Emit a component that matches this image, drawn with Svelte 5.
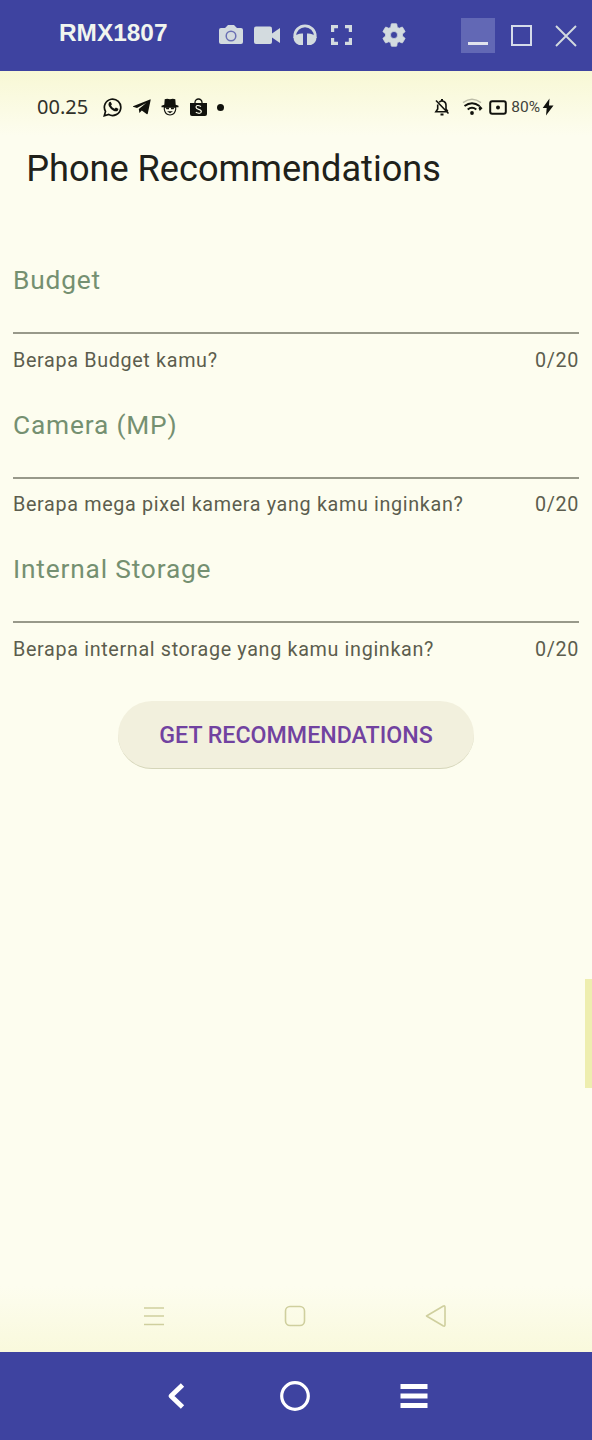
<script>
  const fields = [
    { label: 'Budget', hint: 'Berapa Budget kamu?' },
    { label: 'Camera (MP)', hint: 'Berapa mega pixel kamera yang kamu inginkan?' },
    { label: 'Internal Storage', hint: 'Berapa internal storage yang kamu inginkan?' }
  ];
</script>

<div class="window">
  <header class="titlebar">
    <span class="device">RMX1807</span>
    <div class="tools">
      <svg width="26" height="22" viewBox="0 0 26 22"><path fill="currentColor" fill-rule="evenodd" d="M3 4h4l3-3h6l3 3h4q2 0 2 2v12q0 2-2 2H3q-2 0-2-2V6q0-2 2-2z"/><circle cx="13" cy="12" r="4.800" fill="none" stroke="#6a70b4" stroke-width="1.500"/></svg>
      <svg width="28" height="22" viewBox="0 0 28 22"><rect x="0" y="2.500" width="18" height="17.500" rx="2" fill="currentColor"/><path fill="currentColor" d="M18 9.500l8-5.500v15l-8-5.500z"/></svg>
      <svg width="26" height="24" viewBox="0 0 26 24"><path fill="none" stroke="currentColor" stroke-width="2.800" d="M2.800 15v-2a10.200 10.200 0 0 1 20.400 0v2"/><path fill="currentColor" d="M1.500 14q4-4 9.500-3.500V22H7q-5.500-2-5.500-8zM15 10.500q5.500-.5 9.500 3.500 0 6-5.500 8h-4z"/></svg>
      <svg class="expand" width="23" height="22" viewBox="0 0 23 22"><path fill="none" stroke="currentColor" stroke-width="3.200" d="M8 2.600H2.600V8M15 2.600h5.400V8M8 19.400H2.600V14M15 19.400h5.400V14"/></svg>
      <svg class="gear" width="26" height="26" viewBox="1 1 22 22"><path fill="currentColor" stroke="currentColor" stroke-width=".6" d="M19.140 12.940c.04-.3.06-.61.06-.94 0-.32-.02-.64-.07-.94l2.030-1.580c.18-.14.23-.41.12-.61l-1.920-3.320c-.12-.22-.37-.29-.59-.22l-2.390.96c-.5-.38-1.030-.7-1.620-.94L14.400 2.810c-.04-.24-.24-.41-.48-.41h-3.840c-.24 0-.43.17-.47.41L9.250 5.350C8.660 5.590 8.120 5.920 7.630 6.290L5.240 5.330c-.22-.08-.47 0-.59.22L2.740 8.870c-.12.21-.08.47.12.61l2.030 1.580C4.840 11.360 4.800 11.690 4.800 12s.02.64.07.94l-2.030 1.580c-.18.14-.23.41-.12.61l1.920 3.320c.12.22.37.29.59.22l2.390-.96c.5.38 1.030.7 1.620.94l.36 2.540c.05.24.24.41.48.41h3.840c.24 0 .44-.17.47-.41l.36-2.540c.59-.24 1.130-.56 1.620-.94l2.390.96c.22.08.47 0 .59-.22l1.920-3.320c.12-.22.07-.47-.12-.61l-2.010-1.580zM12 15a3 3 0 1 1 0-6 3 3 0 0 1 0 6z"/></svg>
    </div>
    <div class="controls">
      <span class="minimize"><i></i></span>
      <span class="maximize"></span>
      <svg width="22" height="22" viewBox="0 0 22 22"><path fill="none" stroke="currentColor" stroke-width="1.900" d="M1 1l20 20M21 1L1 21"/></svg>
    </div>
  </header>

  <main class="screen">
    <div class="status">
      <span class="clock">00.25</span>
      <div class="apps">
        <svg width="20" height="20" viewBox="0 0 20 20"><path fill="none" stroke="currentColor" stroke-width="1.700" d="M1.300 18.700l1.200-4.300a8.200 8.200 0 1 1 3.200 3.100z"/><path fill="currentColor" d="M6 5.500q1-1.100 1.800-.6l1 2.200q.2.500-.8 1.500 1.200 2.300 3.600 3.200l1.300-1.300 2.400 1.200q.4.400-.4 1.700-1.600 1.700-4.400.3-3-1.500-4.700-4.700Q5 7 6 5.500z"/></svg>
        <svg width="19" height="18" viewBox="0 0 19 18"><path fill="currentColor" d="M1 8.300L18 1.400q.8-.2.600.8L15.800 15.500q-.3 1-1.200.4L9.800 12.400l-2.400 2.700-.6-4.100L14.200 4.900 5 10 1 8.800z"/></svg>
        <svg width="18" height="18" viewBox="0 0 18 18"><path fill="currentColor" d="M3.700 1.200q2.300-.8 5.300 0 3-.8 5.300 0l.4 5.500 2.800 1v1.500H.5V7.700l2.800-1z"/><path fill="#fbfbe9" stroke="currentColor" stroke-width="1.100" d="M3.300 9.200v2.200q.8 5.300 5.700 5.600 4.900-.3 5.700-5.600V9.200z"/><path fill="currentColor" d="M4.500 9.400H8v1.800H5.500zM10 9.400h3.500l-1 1.800H10zM6 13.200h6L9 15.300z"/></svg>
        <svg width="17" height="19" viewBox="0 0 17 19"><path fill="none" stroke="currentColor" stroke-width="1.300" d="M5 6V4.500a3.500 3.500 0 0 1 7 0V6"/><path fill="currentColor" d="M0 5h17v11q0 2-2 2H2q-2 0-2-2z"/><path fill="none" stroke="#fbfbe9" stroke-width="1.200" d="M11 8.500q-4.500-2.200-5 .5 0 1.600 2.600 2.300 2.900.8 2.700 2.500-.8 2.700-5.500.5"/></svg>
        <i class="dot"></i>
      </div>
      <div class="system">
        <svg width="16" height="18" viewBox="0 0 16 18"><path fill="none" stroke="currentColor" stroke-width="1.600" d="M5.200 4.200A4 4 0 0 1 12 7v4l1.800 2.500M3.700 6.500V11L1.900 13.700h10.500M2 2.500l12.500 13"/><path stroke="currentColor" stroke-width="2" d="M8 1v2M6.500 16.500h3"/></svg>
        <svg width="21" height="18" viewBox="0 0 21 18"><path fill="none" stroke="#bdbda8" stroke-width="1.500" d="M1 4.700q9-7 18 0"/><path fill="none" stroke="currentColor" stroke-width="2" d="M2.500 8q7.500-5.600 15 0M5.700 11.500q4.300-3.500 8.600 0"/><circle cx="10" cy="15" r="1.900" fill="currentColor"/><path fill="currentColor" d="M17.800 7.500l2.700 2.700-2.700 2.800-1.300-2.700z"/></svg>
        <svg width="18" height="15" viewBox="0 0 18 15"><rect x="1.200" y="1.200" width="15.600" height="12.600" rx="2" fill="none" stroke="currentColor" stroke-width="2"/><circle cx="9" cy="7.500" r="2" fill="currentColor"/></svg>
        <span class="percent">80%</span>
        <svg width="12" height="18" viewBox="0 0 12 18"><path fill="currentColor" d="M7.500.5L.7 10h4L4 17.500l7.500-10H7z"/></svg>
      </div>
    </div>

    <h1>Phone Recommendations</h1>

    <form>
      {#each fields as field}
        <div class="field">
          <div class="input">{field.label}</div>
          <div class="help"><span>{field.hint}</span><span>0/20</span></div>
        </div>
      {/each}
      <button type="button">GET RECOMMENDATIONS</button>
    </form>

    <i class="edge"></i>

    <nav class="gestures">
      <svg width="22" height="22" viewBox="0 0 22 22"><path d="M1 3h20M1 11h20M1 19.500h20"/></svg>
      <svg width="22" height="22" viewBox="0 0 22 22"><rect x="1.500" y="1.500" width="19" height="19" rx="4.500"/></svg>
      <svg width="22" height="24" viewBox="0 0 22 24"><path stroke-linejoin="round" d="M1.500 12L18 2.200q2-1 2 1v17.600q0 2-2 1z"/></svg>
    </nav>
  </main>

  <footer>
    <svg width="18" height="26" viewBox="0 0 18 26"><path fill="none" stroke="#fff" stroke-width="4.800" stroke-linejoin="round" d="M15.500 2L4 13l11.500 11"/></svg>
    <svg class="home" width="32" height="32" viewBox="0 0 32 32"><circle cx="16" cy="16" r="13.300" fill="none" stroke="#fff" stroke-width="3.200"/></svg>
    <svg width="28" height="26" viewBox="0 0 28 26"><path stroke="#fff" stroke-width="4.800" d="M.5 3.500h27M.5 13h27M.5 22.500h27"/></svg>
  </footer>
</div>

<style>
  :global(body) { margin: 0; }
  .window { width: 592px; height: 1440px; display: flex; flex-direction: column; font-family: Roboto, sans-serif; overflow: hidden; }
  svg { display: block; flex: none; }
  .titlebar { height: 71px; box-sizing: border-box; flex: none; display: flex; align-items: center; padding-left: 59px; background: #3e43a0; color: #d3dbdf; }
  .device { width: 158.500px; font: bold 24.400px/28px "Liberation Sans", sans-serif; color: #f1f5ef; margin-top: -6px; }
  .tools { display: flex; align-items: center; gap: 10px; margin-top: -2px; }
  .tools .expand { margin-left: 2px; }
  .tools .gear { margin-left: 18.500px; }
  .controls { display: flex; align-items: center; margin-left: auto; padding-right: 15px; }
  .minimize { width: 34px; height: 35px; margin: -1px 16px 0 0; background: #6268b5; display: flex; justify-content: center; align-items: flex-end; }
  .minimize i { width: 20px; height: 3px; background: #e2e4ee; margin-bottom: 8px; }
  .maximize { width: 21px; height: 21px; margin-right: 23px; box-sizing: border-box; border: 2px solid #d5dbea; }
  .screen { flex: 1; position: relative; display: flex; flex-direction: column; background: linear-gradient(#f8f8d5, #fdfdef 65px, #fdfdef 1215px, #f9f9dc); }
  .status { height: 36px; margin-top: 18px; display: flex; align-items: center; padding: 0 38px 0 37px; color: #11120d; }
  .clock { font: 20px/28px "Noto Sans", sans-serif; width: 66px; color: #30312a; }
  .apps { display: flex; align-items: center; gap: 9.500px; }
  .apps svg:nth-child(2) { margin-left: -1px; }
  .apps svg:nth-child(3) { margin-left: 1px; }
  .apps svg:nth-child(4) { margin-left: 1px; }
  .dot { width: 7px; height: 7px; margin-left: 1px; border-radius: 50%; background: #11120d; }
  .system { display: flex; align-items: center; margin-left: auto; }
  .system svg:nth-child(2) { margin-left: 12px; }
  .system svg:nth-child(3) { margin-left: 6.500px; }
  .percent { font-size: 15.500px; margin: 0 2px 0 4px; color: #41423a; }
  h1 { margin: 23px 0 0 26.200px; font-size: 36.150px; font-weight: 400; line-height: 42px; color: #20211a; }
  form { margin: 68px 13px 0; display: flex; flex-direction: column; }
  .field { height: 144.500px; }
  .input { height: 76px; box-sizing: border-box; padding-top: 5px; border-bottom: 2px solid #98998a; font-size: 26.300px; line-height: 34px; letter-spacing: .82px; color: #759071; }
  .help { display: flex; justify-content: space-between; padding-top: 13.700px; font-size: 19.750px; line-height: 26px; letter-spacing: .66px; color: #5c5d4e; }
  button { align-self: center; width: 356px; height: 68px; margin-top: 9px; padding: 2px 0 0; border: 0; border-bottom: 1.500px solid #d5d5b9; border-radius: 34px; background: #f2f0dd; font: 500 23.200px Roboto, sans-serif; color: #7142a0; }
  .edge { position: absolute; right: 0; top: 908px; width: 7px; height: 109px; background: #eeeeaf; }
  .gestures { margin-top: auto; height: 72px; display: flex; align-items: center; justify-content: space-between; padding: 0 145px 0 143px; }
  .gestures svg { fill: none; stroke: #cfcf9e; stroke-width: 1.600; }
  footer { height: 88px; flex: none; box-sizing: border-box; display: flex; align-items: center; justify-content: space-between; padding: 0 164px 0 167px; background: #3e43a0; }
  .home { margin-left: 5px; }
</style>
